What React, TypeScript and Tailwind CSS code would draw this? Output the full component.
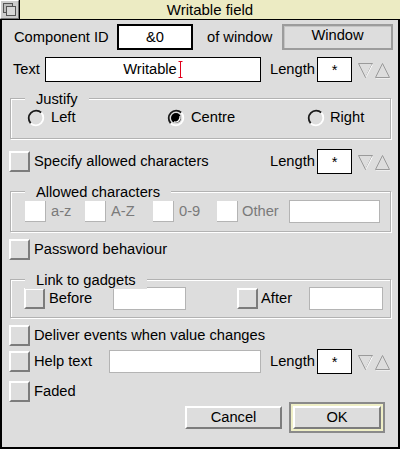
import React from 'react';

const font = "font-['Liberation_Sans',Arial,sans-serif] text-[14.7px] text-black leading-none";

const Check = ({ faded }: { faded?: boolean }) =>
  faded ? (
    <span className="block w-[21px] h-[21px] shrink-0 bg-white border-r border-b border-[#b4b4b4]" />
  ) : (
    <span className="block w-[21px] h-[21px] shrink-0 bg-[#dddddd] border-2 border-t-white border-l-white border-r-[#7c7c7c] border-b-[#7c7c7c]" />
  );

const Radio = ({ on }: { on?: boolean }) => (
  <svg width="18" height="18" viewBox="0 0 18 18" className="shrink-0">
    <circle cx="9" cy="9" r="7.5" fill="#dddddd" />
    <path d="M14.3 3.7 A7.5 7.5 0 0 0 3.7 14.3" fill="none" stroke="#1a1a1a" strokeWidth="1.8" />
    <path d="M3.7 14.3 A7.5 7.5 0 0 0 14.3 3.7" fill="none" stroke="#ffffff" strokeWidth="1.8" />
    {on && <circle cx="9" cy="9" r="5" fill="#000" />}
    {on && <path d="M13 7 A5 5 0 0 1 7 13" fill="none" stroke="#ffffff" strokeWidth="1.4" />}
  </svg>
);

const Arrows = () => (
  <svg width="34" height="20" viewBox="0 0 34 20" className="shrink-0 ml-[5px]">
    <polygon points="1.5,3.5 15.5,3.5 8.5,17.5" fill="none" stroke="#9a9a9a" strokeWidth="1" />
    <line x1="15.5" y1="4.5" x2="9" y2="17" stroke="#ffffff" strokeWidth="1" />
    <polygon points="18.5,17.5 32.5,17.5 25.5,3.5" fill="none" stroke="#9a9a9a" strokeWidth="1" />
    <line x1="19.5" y1="18.5" x2="32.5" y2="18.5" stroke="#ffffff" strokeWidth="1" strokeDasharray="1 1" />
  </svg>
);

const Length = () => (
  <div className="ml-auto flex items-center h-full">
    <span className="w-[47px]">Length</span>
    <span className="w-[35px] h-[25px] bg-white border border-black flex items-start justify-center pt-[5px]">*</span>
    <Arrows />
  </div>
);

const Group = ({ label, labelLeft, children, h }: { label: string; labelLeft: string; children: React.ReactNode; h: string }) => (
  <div className={`relative ml-[8px] w-[381px] ${h} border border-[#b2b2b2] shadow-[inset_1px_1px_0_#ffffff,1px_1px_0_#ffffff]`}>
    <span className={`absolute top-[-9px] ${labelLeft} px-[11px] bg-[#dddddd] h-[18px] flex items-center`}>{label}</span>
    {children}
  </div>
);

const OptRow = ({ label, mt }: { label: string; mt: string }) => (
  <div className={`${mt} h-[21px] flex items-center pl-[7px]`}>
    <Check />
    <span className="ml-[4px]">{label}</span>
  </div>
);

export default function App() {
  return (
    <div className={`w-[400px] h-[449px] flex flex-col bg-[#dddddd] ${font}`}>
      {/* title bar */}
      <div className="h-[20px] flex border-b border-black shrink-0">
        <div className="w-[19px] h-[19px] bg-[#cdcdcd] border border-t-white border-l-white border-r-[#777] border-b-[#777] flex items-center justify-center">
          <svg width="15" height="15" viewBox="0 0 15 15">
            <rect x="1.5" y="1.5" width="9" height="9" fill="#bdbdbd" stroke="#555" />
            <rect x="4.5" y="4.5" width="9" height="9" fill="#d8d8d8" stroke="#555" />
          </svg>
        </div>
        <div className="flex-1 border-l border-black bg-[#ecebc3] flex items-center justify-center text-[15px]">Writable field</div>
      </div>

      <div className="flex-1 flex flex-col border-x-2 border-b-2 border-black">
        {/* Component ID */}
        <div className="mt-[4px] h-[26px] flex items-center pl-[12px]">
          <span className="w-[103px]">Component ID</span>
          <span className="w-[76px] h-[26px] bg-white border-2 border-black flex items-center justify-center">&amp;0</span>
          <span className="ml-[14px] w-[75px]">of window</span>
          <span className="w-[111px] h-[26px] border-2 border-[#9c9c9c] shadow-[inset_1px_1px_0_#c4c4c4] flex items-center justify-center pb-[3px]">Window</span>
        </div>

        {/* Text */}
        <div className="mt-[7px] h-[25px] flex items-center pl-[11px] pr-[7px]">
          <span className="w-[32px]">Text</span>
          <span className="w-[216px] h-[25px] bg-white border border-black flex items-center justify-center">
            Writable
            <svg width="5" height="17" viewBox="0 0 5 17" className="ml-[1px]">
              <path d="M0.5 0.5 H4.5 M2.5 0.5 V16.5 M0.5 16.5 H4.5" stroke="#e0001b" strokeWidth="1" fill="none" />
            </svg>
          </span>
          <Length />
        </div>

        {/* Justify */}
        <div className="mt-[16px]">
          <Group label="Justify" labelLeft="left-[14px]" h="h-[41px]">
            <div className="h-full flex items-center pl-[16px] pb-[2px]">
              <div className="w-[140px] flex items-center"><Radio /><span className="ml-[6px]">Left</span></div>
              <div className="w-[140px] flex items-center"><Radio on /><span className="ml-[6px]">Centre</span></div>
              <div className="flex items-center"><Radio /><span className="ml-[5px]">Right</span></div>
            </div>
          </Group>
        </div>

        {/* Specify allowed characters */}
        <div className="mt-[10px] h-[25px] flex items-center pl-[7px] pr-[7px]">
          <Check />
          <span className="ml-[4px]">Specify allowed characters</span>
          <Length />
        </div>

        {/* Allowed characters */}
        <div className="mt-[17px]">
          <Group label="Allowed characters" labelLeft="left-[14px]" h="h-[41px]">
            <div className="h-full flex items-center pl-[14px] text-[#7a7a7a]">
              <div className="w-[60px] flex items-center"><Check faded /><span className="ml-[5px]">a-z</span></div>
              <div className="w-[68px] flex items-center"><Check faded /><span className="ml-[5px]">A-Z</span></div>
              <div className="w-[64px] flex items-center"><Check faded /><span className="ml-[5px]">0-9</span></div>
              <div className="w-[72px] flex items-center"><Check faded /><span className="ml-[4px]">Other</span></div>
              <span className="w-[91px] h-[23px] bg-white border border-[#b4b4b4]" />
            </div>
          </Group>
        </div>

        <OptRow label="Password behaviour" mt="mt-[7px]" />

        {/* Link to gadgets */}
        <div className="mt-[19px]">
          <Group label="Link to gadgets" labelLeft="left-[14px]" h="h-[39px]">
            <div className="h-full flex items-center pl-[13px]">
              <div className="w-[89px] flex items-center"><Check /><span className="ml-[4px]">Before</span></div>
              <span className="w-[73px] h-[23px] bg-white border border-[#b4b4b4]" />
              <div className="ml-[51px] w-[72px] flex items-center"><Check /><span className="ml-[3px]">After</span></div>
              <span className="w-[74px] h-[23px] bg-white border border-[#b4b4b4]" />
            </div>
          </Group>
        </div>

        <OptRow label="Deliver events when value changes" mt="mt-[7px]" />

        {/* Help text */}
        <div className="mt-[3px] h-[25px] flex items-center pl-[7px] pr-[7px]">
          <Check />
          <span className="ml-[4px] w-[75px]">Help text</span>
          <span className="w-[152px] h-[23px] bg-white border border-[#b4b4b4]" />
          <Length />
        </div>

        <OptRow label="Faded" mt="mt-[7px]" />

        {/* Buttons */}
        <div className="h-[31px] flex items-center pl-[183px]">
          <button className="w-[97px] h-[23px] bg-[#dddddd] border-2 border-t-white border-l-white border-r-[#7c7c7c] border-b-[#7c7c7c] flex items-center justify-center">
            Cancel
          </button>
          <div className="ml-[7px] w-[96px] h-[31px] border-2 border-[#8a8a8a] bg-[#efefc6] p-[2px]">
            <button className="w-full h-full bg-[#dddddd] border-2 border-t-white border-l-white border-r-[#7c7c7c] border-b-[#7c7c7c] flex items-center justify-center">
              OK
            </button>
          </div>
        </div>
      </div>
    </div>
  );
}
